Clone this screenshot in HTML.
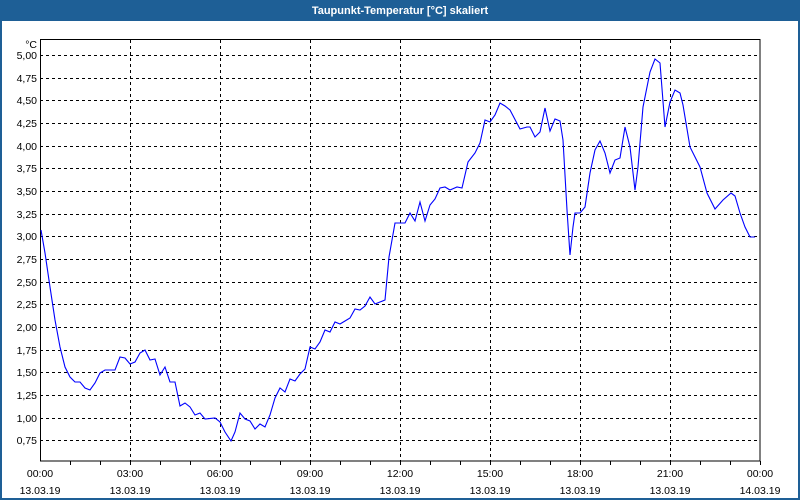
<!DOCTYPE html>
<html><head><meta charset="utf-8"><style>
html,body{margin:0;padding:0;width:800px;height:500px;overflow:hidden;background:#fff}
svg{display:block}
text{font-family:"Liberation Sans",sans-serif;font-size:10.5px;fill:#000}
</style></head><body>
<svg width="800" height="500" viewBox="0 0 800 500" xmlns="http://www.w3.org/2000/svg">
<rect x="0" y="0" width="800" height="500" fill="#1e5f96"/>
<rect x="2" y="21" width="796" height="477" fill="#fff"/>
<text x="400" y="14" text-anchor="middle" style="fill:#fff;font-weight:bold;font-size:11px">Taupunkt-Temperatur [°C] skaliert</text>
<g stroke="#000" stroke-width="1" stroke-dasharray="3,3" shape-rendering="crispEdges">
<path d="M40 55.5H760M40 78.5H760M40 100.5H760M40 123.5H760M40 146.5H760M40 168.5H760M40 191.5H760M40 214.5H760M40 236.5H760M40 259.5H760M40 282.5H760M40 304.5H760M40 327.5H760M40 350.5H760M40 372.5H760M40 395.5H760M40 418.5H760M40 440.5H760"/>
<path d="M130.5 40V461M220.5 40V461M310.5 40V461M400.5 40V461M490.5 40V461M580.5 40V461M670.5 40V461"/>
</g>
<g stroke="#000" stroke-width="1" fill="none" shape-rendering="crispEdges">
<rect x="40.5" y="39.5" width="719.5" height="421.5"/>
<path d="M70.5 461v4M100.5 461v4M130.5 461v4M160.5 461v4M190.5 461v4M220.5 461v4M250.5 461v4M280.5 461v4M310.5 461v4M340.5 461v4M370.5 461v4M400.5 461v4M430.5 461v4M460.5 461v4M490.5 461v4M520.5 461v4M550.5 461v4M580.5 461v4M610.5 461v4M640.5 461v4M670.5 461v4M700.5 461v4M730.5 461v4M760.5 461v4"/>
</g>
<g text-anchor="end">
<text x="37" y="48">°C</text>
<text x="37" y="59">5,00</text><text x="37" y="82">4,75</text><text x="37" y="104">4,50</text><text x="37" y="127">4,25</text><text x="37" y="150">4,00</text><text x="37" y="172">3,75</text><text x="37" y="195">3,50</text><text x="37" y="218">3,25</text><text x="37" y="240">3,00</text><text x="37" y="263">2,75</text><text x="37" y="286">2,50</text><text x="37" y="308">2,25</text><text x="37" y="331">2,00</text><text x="37" y="354">1,75</text><text x="37" y="376">1,50</text><text x="37" y="399">1,25</text><text x="37" y="422">1,00</text><text x="37" y="444">0,75</text>
</g>
<g text-anchor="middle">
<text x="40" y="477">00:00</text><text x="40" y="494">13.03.19</text>
<text x="130" y="477">03:00</text><text x="130" y="494">13.03.19</text>
<text x="220" y="477">06:00</text><text x="220" y="494">13.03.19</text>
<text x="310" y="477">09:00</text><text x="310" y="494">13.03.19</text>
<text x="400" y="477">12:00</text><text x="400" y="494">13.03.19</text>
<text x="490" y="477">15:00</text><text x="490" y="494">13.03.19</text>
<text x="580" y="477">18:00</text><text x="580" y="494">13.03.19</text>
<text x="670" y="477">21:00</text><text x="670" y="494">13.03.19</text>
<text x="760" y="477">00:00</text><text x="760" y="494">14.03.19</text>
</g>
<polyline fill="none" stroke="#0000ff" stroke-width="1.1" points="41,230 45,253 50,287 55,320 60,347 65,367 70,377 75,382 80,382 85,388 90,390 95,383 100,373 105,370 115,370 120,357 125,358 130,364 135,362 140,353 145,350 150,360 155,359 160,375 165,367 170,382 175,382 180,406 185,403 190,407 195,415 200,413 205,419 215,418 220,422 225,432 231,441 235,432 240,413 245,419 250,421 255,429 260,424 265,427 270,415 275,398 280,388 285,392 290,379 295,381 300,374 305,369 310,347 315,349 320,342 325,330 330,332 335,322 340,324 345,321 350,318 355,309 360,310 365,306 370,297 375,304 380,302 385,300 389,257 395,223 405,223 410,213 415,221 420,202 425,221 430,205 435,199 440,188 445,187 450,190 457,187 462,188 468,162 475,153 480,143 485,120 490,122 495,115 500,103 505,106 510,110 520,129 527,127 530,127 535,137 540,132 545,108 550,131 555,119 560,121 563,140 567,210 570,255 573,227 575,213 580,213 585,207 590,173 595,150 600,141 605,153 610,173 615,160 620,158 625,127 630,147 635,190 638,167 643,107 650,72 655,59 660,63 665,127 670,102 675,90 680,93 683,105 690,147 700,167 707,193 715,209 723,200 731,193 735,196 740,213 745,227 750,237 755,237"/>
</svg>
</body></html>
